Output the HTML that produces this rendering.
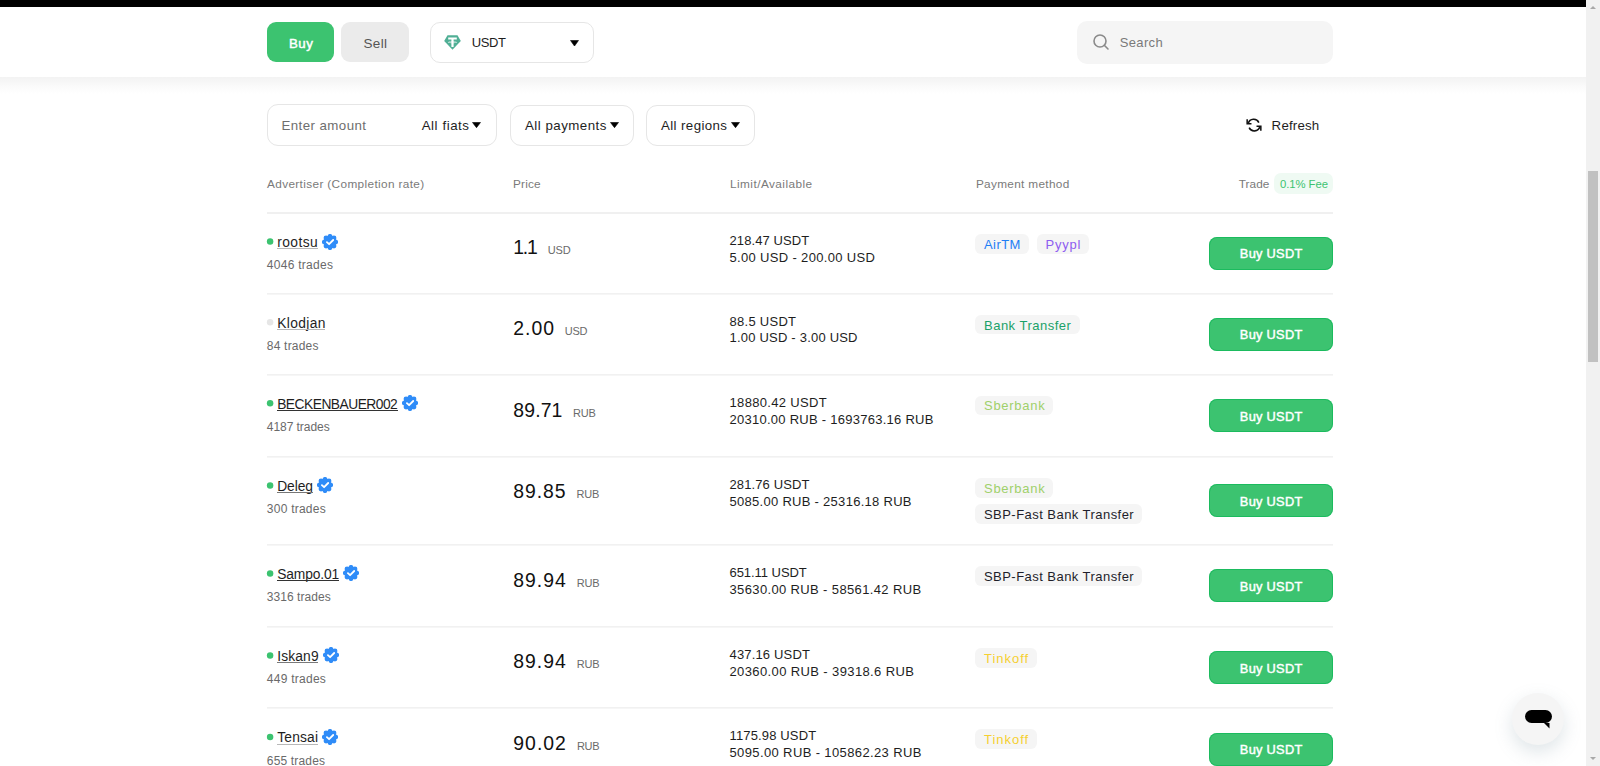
<!DOCTYPE html>
<html><head><meta charset="utf-8">
<style>
html,body{margin:0;padding:0;background:#fff;width:1600px;height:766px;overflow:hidden}
body{position:relative;font-family:"Liberation Sans",sans-serif}
.t{position:absolute;white-space:nowrap}
.b{position:absolute}
</style></head><body>
<div class="b" style="left:0px;top:0px;width:1586px;height:7px;background:#000"></div>
<div class="b" style="left:0px;top:77px;width:1586px;height:17px;background:linear-gradient(#f3f3f3 0%,#f6f6f6 25%,#fbfbfb 60%,#ffffff 100%)"></div>
<div class="b" style="left:267px;top:22px;width:67px;height:40px;background:#3cc370;border-radius:9px"></div>
<div class="t" style="left:289.00px;top:37px;font-size:13.3px;line-height:13.3px;color:#fff;font-weight:400;letter-spacing:0.445px;-webkit-text-stroke:0.45px #fff">Buy</div>
<div class="b" style="left:341px;top:22px;width:68px;height:40px;background:#ebebeb;border-radius:9px"></div>
<div class="t" style="left:363.40px;top:37px;font-size:13.5px;line-height:13.5px;color:#555;font-weight:400;letter-spacing:0.396px;">Sell</div>
<div class="b" style="left:430px;top:22px;width:164px;height:41px;border:1px solid #e6e6e6;border-radius:10px;box-sizing:border-box"></div>
<svg class="b" style="left:444px;top:35px" width="17" height="15" viewBox="0 0 17 15">
<path d="M3.5 0.3 H13.5 L16.8 6 L8.5 14.8 L0.2 6 Z" fill="#50af95"/>
<path d="M4.2 2.6 H12.8 V4.6 H9.6 V6.2 C11.6 6.35 13 6.75 13 7.2 C13 7.65 11.6 8.05 9.6 8.2 V12 H7.4 V8.2 C5.4 8.05 4 7.65 4 7.2 C4 6.75 5.4 6.35 7.4 6.2 V4.6 H4.2 Z M7.4 6.8 C6 6.9 5.1 7.05 5.1 7.2 C5.1 7.4 6.6 7.6 8.5 7.6 C10.4 7.6 11.9 7.4 11.9 7.2 C11.9 7.05 11 6.9 9.6 6.8 V7.4 C9.25 7.42 8.9 7.43 8.5 7.43 C8.1 7.43 7.75 7.42 7.4 7.4 Z" fill="#fff"/>
</svg>
<div class="t" style="left:471.70px;top:36px;font-size:13px;line-height:13px;color:#1e1e1e;font-weight:400;letter-spacing:-0.364px;">USDT</div>
<svg class="b" style="left:569.8px;top:39.6px" width="9" height="6.6" viewBox="0 0 9 6.6"><path d="M0.5 0.5 H8.5 L4.5 6.1 Z" fill="#000" stroke="#000" stroke-width="0.6" stroke-linejoin="round"/></svg>
<div class="b" style="left:1077px;top:21px;width:256px;height:43px;background:#f5f5f5;border-radius:10px"></div>
<svg class="b" style="left:1092px;top:33px" width="18" height="18" viewBox="0 0 18 18"><circle cx="8" cy="8" r="6" fill="none" stroke="#8a8a8a" stroke-width="1.6"/><path d="M12.3 12.3 L16 16" stroke="#8a8a8a" stroke-width="1.6" stroke-linecap="round"/></svg>
<div class="t" style="left:1119.80px;top:36px;font-size:13px;line-height:13px;color:#7a7a7a;font-weight:400;letter-spacing:0.324px;">Search</div>
<div class="b" style="left:267px;top:104px;width:230px;height:42px;border:1px solid #e6e6e6;border-radius:11px;box-sizing:border-box"></div>
<div class="t" style="left:281.50px;top:119px;font-size:13.3px;line-height:13.3px;color:#6e6e6e;font-weight:400;letter-spacing:0.424px;">Enter amount</div>
<div class="t" style="left:421.70px;top:119px;font-size:13.3px;line-height:13.3px;color:#1e1e1e;font-weight:400;letter-spacing:0.555px;">All fiats</div>
<svg class="b" style="left:472.3px;top:122.1px" width="9" height="6.2" viewBox="0 0 9 6.2"><path d="M0.5 0.5 H8.5 L4.5 5.7 Z" fill="#000" stroke="#000" stroke-width="0.6" stroke-linejoin="round"/></svg>
<div class="b" style="left:510px;top:105px;width:124px;height:41px;border:1px solid #e6e6e6;border-radius:11px;box-sizing:border-box"></div>
<div class="t" style="left:525.00px;top:119px;font-size:13.3px;line-height:13.3px;color:#1e1e1e;font-weight:400;letter-spacing:0.478px;">All payments</div>
<svg class="b" style="left:609.6px;top:122.1px" width="9" height="6.2" viewBox="0 0 9 6.2"><path d="M0.5 0.5 H8.5 L4.5 5.7 Z" fill="#000" stroke="#000" stroke-width="0.6" stroke-linejoin="round"/></svg>
<div class="b" style="left:646px;top:105px;width:109px;height:41px;border:1px solid #e6e6e6;border-radius:11px;box-sizing:border-box"></div>
<div class="t" style="left:661.00px;top:119px;font-size:13.3px;line-height:13.3px;color:#1e1e1e;font-weight:400;letter-spacing:0.389px;">All regions</div>
<svg class="b" style="left:730.8px;top:122.1px" width="9" height="6.2" viewBox="0 0 9 6.2"><path d="M0.5 0.5 H8.5 L4.5 5.7 Z" fill="#000" stroke="#000" stroke-width="0.6" stroke-linejoin="round"/></svg>
<svg class="b" style="left:1245px;top:117px" width="18" height="16.2" viewBox="0 0 20 18">
<path d="M3.6 7.2 A6.3 6.3 0 0 1 15.4 6.2" fill="none" stroke="#111" stroke-width="1.7"/>
<path d="M16.4 10.8 A6.3 6.3 0 0 1 4.6 11.8" fill="none" stroke="#111" stroke-width="1.7"/>
<path d="M2.4 2.6 V7.6 H7.2" fill="none" stroke="#111" stroke-width="1.7"/>
<path d="M17.6 15.4 V10.4 H12.8" fill="none" stroke="#111" stroke-width="1.7"/>
</svg>
<div class="t" style="left:1271.60px;top:119px;font-size:13.3px;line-height:13.3px;color:#1e1e1e;font-weight:400;letter-spacing:0.186px;">Refresh</div>
<div class="t" style="left:267.00px;top:179px;font-size:11.8px;line-height:11.8px;color:#7a7a7a;font-weight:400;letter-spacing:0.357px;">Advertiser (Completion rate)</div>
<div class="t" style="left:513.10px;top:179px;font-size:11.8px;line-height:11.8px;color:#7a7a7a;font-weight:400;letter-spacing:0.131px;">Price</div>
<div class="t" style="left:730.00px;top:179px;font-size:11.8px;line-height:11.8px;color:#7a7a7a;font-weight:400;letter-spacing:0.452px;">Limit/Available</div>
<div class="t" style="left:975.90px;top:179px;font-size:11.8px;line-height:11.8px;color:#7a7a7a;font-weight:400;letter-spacing:0.322px;">Payment method</div>
<div class="t" style="left:1238.80px;top:179px;font-size:11.8px;line-height:11.8px;color:#7a7a7a;font-weight:400;letter-spacing:0.029px;">Trade</div>
<div class="b" style="left:1274px;top:173px;width:59px;height:21px;background:#effaf3;border-radius:7px"></div>
<div class="t" style="left:1279.90px;top:179px;font-size:11.3px;line-height:11.3px;color:#3cc370;font-weight:400;letter-spacing:-0.038px;">0.1% Fee</div>
<div class="b" style="left:267px;top:212px;width:1066px;height:2px;background:#f0f0f0"></div>
<div class="b" style="left:267px;top:293px;width:1066px;height:1px;background:#f1f1f1"></div>
<div class="b" style="left:267px;top:294px;width:1066px;height:1px;background:#f6f6f6"></div>
<div class="b" style="left:267px;top:374px;width:1066px;height:1px;background:#f1f1f1"></div>
<div class="b" style="left:267px;top:375px;width:1066px;height:1px;background:#f6f6f6"></div>
<div class="b" style="left:267px;top:456px;width:1066px;height:1px;background:#f1f1f1"></div>
<div class="b" style="left:267px;top:457px;width:1066px;height:1px;background:#f6f6f6"></div>
<div class="b" style="left:267px;top:544px;width:1066px;height:1px;background:#f1f1f1"></div>
<div class="b" style="left:267px;top:545px;width:1066px;height:1px;background:#f6f6f6"></div>
<div class="b" style="left:267px;top:626px;width:1066px;height:1px;background:#f1f1f1"></div>
<div class="b" style="left:267px;top:627px;width:1066px;height:1px;background:#f6f6f6"></div>
<div class="b" style="left:267px;top:707px;width:1066px;height:1px;background:#f1f1f1"></div>
<div class="b" style="left:267px;top:708px;width:1066px;height:1px;background:#f6f6f6"></div>
<svg class="b" style="left:266px;top:237px" width="9" height="9" viewBox="0 0 9 9"><circle cx="4.1" cy="4.50" r="3.25" fill="#3cc370"/></svg>
<div class="t" style="left:277.20px;top:236px;font-size:13.8px;line-height:13.8px;color:#1e1e1e;font-weight:400;letter-spacing:0.447px;">rootsu</div>
<div class="b" style="left:277px;top:248px;width:41px;height:1px;background:#b8b8b8"></div>
<svg class="b" style="left:322.10px;top:233.50px" width="16" height="16" viewBox="0 0 16 16"><g fill="#2f8cf8"><circle cx="8" cy="8" r="6.4"/><circle cx="8.00" cy="2.40" r="2.45"/><circle cx="11.96" cy="4.04" r="2.45"/><circle cx="13.60" cy="8.00" r="2.45"/><circle cx="11.96" cy="11.96" r="2.45"/><circle cx="8.00" cy="13.60" r="2.45"/><circle cx="4.04" cy="11.96" r="2.45"/><circle cx="2.40" cy="8.00" r="2.45"/><circle cx="4.04" cy="4.04" r="2.45"/></g><path d="M4.9 8.1 L7.1 10.2 L11.2 6" fill="none" stroke="#fff" stroke-width="1.8" stroke-linecap="round" stroke-linejoin="round"/></svg>
<div class="t" style="left:266.80px;top:259px;font-size:12px;line-height:12px;color:#6a6a6a;font-weight:400;letter-spacing:0.271px;">4046 trades</div>
<div class="t" style="left:513.30px;top:238px;font-size:19.4px;line-height:19.4px;color:#111;font-weight:400;letter-spacing:-1.283px;">1.1</div>
<div class="t" style="left:547.80px;top:245px;font-size:11px;line-height:11px;color:#6a6a6a;font-weight:400;letter-spacing:-0.219px;">USD</div>
<div class="t" style="left:729.50px;top:234px;font-size:13px;line-height:13px;color:#1e1e1e;font-weight:400;letter-spacing:0.092px;">218.47 USDT</div>
<div class="t" style="left:729.50px;top:251px;font-size:13px;line-height:13px;color:#1e1e1e;font-weight:400;letter-spacing:0.333px;">5.00 USD - 200.00 USD</div>
<div class="b" style="left:975.20px;top:233.90px;width:53.90px;height:19.8px;background:#f5f5f5;border-radius:6px"></div>
<div class="t" style="left:984.00px;top:238px;font-size:13px;line-height:13px;color:#1f7ef5;font-weight:400;letter-spacing:0.414px;">AirTM</div>
<div class="b" style="left:1036.70px;top:233.90px;width:52.60px;height:19.8px;background:#f5f5f5;border-radius:6px"></div>
<div class="t" style="left:1045.50px;top:238px;font-size:13px;line-height:13px;color:#8e5cf0;font-weight:400;letter-spacing:0.804px;">Pyypl</div>
<div class="b" style="left:1209px;top:236.90px;width:124px;height:32.8px;background:#3cc370;border-radius:8px;box-shadow:inset 0 0 0 1px rgba(0,180,80,0.55)"></div>
<div class="t" style="left:1239.80px;top:248px;font-size:12.8px;line-height:12.8px;color:#fff;font-weight:400;letter-spacing:0.293px;-webkit-text-stroke:0.45px #fff">Buy USDT</div>
<svg class="b" style="left:266px;top:318px" width="9" height="9" viewBox="0 0 9 9"><circle cx="4.1" cy="4.30" r="3.25" fill="#e6e6e6"/></svg>
<div class="t" style="left:277.20px;top:317px;font-size:13.8px;line-height:13.8px;color:#1e1e1e;font-weight:400;letter-spacing:0.380px;">Klodjan</div>
<div class="b" style="left:277px;top:329px;width:48px;height:1px;background:#b8b8b8"></div>
<div class="t" style="left:266.80px;top:340px;font-size:12px;line-height:12px;color:#6a6a6a;font-weight:400;letter-spacing:0.207px;">84 trades</div>
<div class="t" style="left:513.30px;top:319px;font-size:19.4px;line-height:19.4px;color:#111;font-weight:400;letter-spacing:1.039px;">2.00</div>
<div class="t" style="left:564.70px;top:326px;font-size:11px;line-height:11px;color:#6a6a6a;font-weight:400;letter-spacing:-0.219px;">USD</div>
<div class="t" style="left:729.50px;top:315px;font-size:13px;line-height:13px;color:#1e1e1e;font-weight:400;letter-spacing:0.273px;">88.5 USDT</div>
<div class="t" style="left:729.50px;top:331px;font-size:13px;line-height:13px;color:#1e1e1e;font-weight:400;letter-spacing:0.207px;">1.00 USD - 3.00 USD</div>
<div class="b" style="left:975.20px;top:314.70px;width:104.50px;height:19.8px;background:#f5f5f5;border-radius:6px"></div>
<div class="t" style="left:984.00px;top:319px;font-size:13px;line-height:13px;color:#1aa168;font-weight:400;letter-spacing:0.498px;">Bank Transfer</div>
<div class="b" style="left:1209px;top:317.80px;width:124px;height:32.8px;background:#3cc370;border-radius:8px;box-shadow:inset 0 0 0 1px rgba(0,180,80,0.55)"></div>
<div class="t" style="left:1239.80px;top:329px;font-size:12.8px;line-height:12.8px;color:#fff;font-weight:400;letter-spacing:0.293px;-webkit-text-stroke:0.45px #fff">Buy USDT</div>
<svg class="b" style="left:266px;top:399px" width="9" height="9" viewBox="0 0 9 9"><circle cx="4.1" cy="4.30" r="3.25" fill="#3cc370"/></svg>
<div class="t" style="left:277.20px;top:398px;font-size:13.8px;line-height:13.8px;color:#1e1e1e;font-weight:400;letter-spacing:-0.516px;">BECKENBAUER002</div>
<div class="b" style="left:277px;top:410px;width:121px;height:1px;background:#333333"></div>
<svg class="b" style="left:402.10px;top:395.30px" width="16" height="16" viewBox="0 0 16 16"><g fill="#2f8cf8"><circle cx="8" cy="8" r="6.4"/><circle cx="8.00" cy="2.40" r="2.45"/><circle cx="11.96" cy="4.04" r="2.45"/><circle cx="13.60" cy="8.00" r="2.45"/><circle cx="11.96" cy="11.96" r="2.45"/><circle cx="8.00" cy="13.60" r="2.45"/><circle cx="4.04" cy="11.96" r="2.45"/><circle cx="2.40" cy="8.00" r="2.45"/><circle cx="4.04" cy="4.04" r="2.45"/></g><path d="M4.9 8.1 L7.1 10.2 L11.2 6" fill="none" stroke="#fff" stroke-width="1.8" stroke-linecap="round" stroke-linejoin="round"/></svg>
<div class="t" style="left:266.80px;top:421px;font-size:12px;line-height:12px;color:#6a6a6a;font-weight:400;letter-spacing:-0.049px;">4187 trades</div>
<div class="t" style="left:513.30px;top:401px;font-size:19.4px;line-height:19.4px;color:#111;font-weight:400;letter-spacing:0.138px;">89.71</div>
<div class="t" style="left:573.00px;top:408px;font-size:11px;line-height:11px;color:#6a6a6a;font-weight:400;letter-spacing:-0.219px;">RUB</div>
<div class="t" style="left:729.50px;top:396px;font-size:13px;line-height:13px;color:#1e1e1e;font-weight:400;letter-spacing:0.333px;">18880.42 USDT</div>
<div class="t" style="left:729.50px;top:413px;font-size:13px;line-height:13px;color:#1e1e1e;font-weight:400;letter-spacing:0.261px;">20310.00 RUB - 1693763.16 RUB</div>
<div class="b" style="left:975.20px;top:395.70px;width:78.30px;height:19.8px;background:#f5f5f5;border-radius:6px"></div>
<div class="t" style="left:984.00px;top:399px;font-size:13px;line-height:13px;color:#9fd06a;font-weight:400;letter-spacing:0.718px;">Sberbank</div>
<div class="b" style="left:1209px;top:399.35px;width:124px;height:32.8px;background:#3cc370;border-radius:8px;box-shadow:inset 0 0 0 1px rgba(0,180,80,0.55)"></div>
<div class="t" style="left:1239.80px;top:411px;font-size:12.8px;line-height:12.8px;color:#fff;font-weight:400;letter-spacing:0.293px;-webkit-text-stroke:0.45px #fff">Buy USDT</div>
<svg class="b" style="left:266px;top:481px" width="9" height="9" viewBox="0 0 9 9"><circle cx="4.1" cy="4.40" r="3.25" fill="#3cc370"/></svg>
<div class="t" style="left:277.20px;top:480px;font-size:13.8px;line-height:13.8px;color:#1e1e1e;font-weight:400;letter-spacing:-0.088px;">Deleg</div>
<div class="b" style="left:277px;top:492px;width:36px;height:1px;background:#777777"></div>
<svg class="b" style="left:317.20px;top:477.40px" width="16" height="16" viewBox="0 0 16 16"><g fill="#2f8cf8"><circle cx="8" cy="8" r="6.4"/><circle cx="8.00" cy="2.40" r="2.45"/><circle cx="11.96" cy="4.04" r="2.45"/><circle cx="13.60" cy="8.00" r="2.45"/><circle cx="11.96" cy="11.96" r="2.45"/><circle cx="8.00" cy="13.60" r="2.45"/><circle cx="4.04" cy="11.96" r="2.45"/><circle cx="2.40" cy="8.00" r="2.45"/><circle cx="4.04" cy="4.04" r="2.45"/></g><path d="M4.9 8.1 L7.1 10.2 L11.2 6" fill="none" stroke="#fff" stroke-width="1.8" stroke-linecap="round" stroke-linejoin="round"/></svg>
<div class="t" style="left:266.80px;top:503px;font-size:12px;line-height:12px;color:#6a6a6a;font-weight:400;letter-spacing:0.244px;">300 trades</div>
<div class="t" style="left:513.30px;top:482px;font-size:19.4px;line-height:19.4px;color:#111;font-weight:400;letter-spacing:0.913px;">89.85</div>
<div class="t" style="left:576.60px;top:489px;font-size:11px;line-height:11px;color:#6a6a6a;font-weight:400;letter-spacing:-0.219px;">RUB</div>
<div class="t" style="left:729.50px;top:478px;font-size:13px;line-height:13px;color:#1e1e1e;font-weight:400;letter-spacing:0.112px;">281.76 USDT</div>
<div class="t" style="left:729.50px;top:495px;font-size:13px;line-height:13px;color:#1e1e1e;font-weight:400;letter-spacing:0.285px;">5085.00 RUB - 25316.18 RUB</div>
<div class="b" style="left:975.20px;top:477.80px;width:78.30px;height:19.8px;background:#f5f5f5;border-radius:6px"></div>
<div class="t" style="left:984.00px;top:482px;font-size:13px;line-height:13px;color:#9fd06a;font-weight:400;letter-spacing:0.718px;">Sberbank</div>
<div class="b" style="left:975.20px;top:504.10px;width:167.30px;height:19.8px;background:#f5f5f5;border-radius:6px"></div>
<div class="t" style="left:984.00px;top:508px;font-size:13px;line-height:13px;color:#1e1e2a;font-weight:400;letter-spacing:0.454px;">SBP-Fast Bank Transfer</div>
<div class="b" style="left:1209px;top:484.40px;width:124px;height:32.8px;background:#3cc370;border-radius:8px;box-shadow:inset 0 0 0 1px rgba(0,180,80,0.55)"></div>
<div class="t" style="left:1239.80px;top:496px;font-size:12.8px;line-height:12.8px;color:#fff;font-weight:400;letter-spacing:0.293px;-webkit-text-stroke:0.45px #fff">Buy USDT</div>
<svg class="b" style="left:266px;top:569px" width="9" height="9" viewBox="0 0 9 9"><circle cx="4.1" cy="4.40" r="3.25" fill="#3cc370"/></svg>
<div class="t" style="left:277.20px;top:568px;font-size:13.8px;line-height:13.8px;color:#1e1e1e;font-weight:400;letter-spacing:-0.142px;">Sampo.01</div>
<div class="b" style="left:277px;top:580px;width:62px;height:1px;background:#333333"></div>
<svg class="b" style="left:343.40px;top:565.40px" width="16" height="16" viewBox="0 0 16 16"><g fill="#2f8cf8"><circle cx="8" cy="8" r="6.4"/><circle cx="8.00" cy="2.40" r="2.45"/><circle cx="11.96" cy="4.04" r="2.45"/><circle cx="13.60" cy="8.00" r="2.45"/><circle cx="11.96" cy="11.96" r="2.45"/><circle cx="8.00" cy="13.60" r="2.45"/><circle cx="4.04" cy="11.96" r="2.45"/><circle cx="2.40" cy="8.00" r="2.45"/><circle cx="4.04" cy="4.04" r="2.45"/></g><path d="M4.9 8.1 L7.1 10.2 L11.2 6" fill="none" stroke="#fff" stroke-width="1.8" stroke-linecap="round" stroke-linejoin="round"/></svg>
<div class="t" style="left:266.80px;top:591px;font-size:12px;line-height:12px;color:#6a6a6a;font-weight:400;letter-spacing:0.051px;">3316 trades</div>
<div class="t" style="left:513.30px;top:571px;font-size:19.4px;line-height:19.4px;color:#111;font-weight:400;letter-spacing:0.963px;">89.94</div>
<div class="t" style="left:576.80px;top:578px;font-size:11px;line-height:11px;color:#6a6a6a;font-weight:400;letter-spacing:-0.219px;">RUB</div>
<div class="t" style="left:729.50px;top:566px;font-size:13px;line-height:13px;color:#1e1e1e;font-weight:400;letter-spacing:-0.051px;">651.11 USDT</div>
<div class="t" style="left:729.50px;top:583px;font-size:13px;line-height:13px;color:#1e1e1e;font-weight:400;letter-spacing:0.364px;">35630.00 RUB - 58561.42 RUB</div>
<div class="b" style="left:975.20px;top:565.80px;width:167.30px;height:19.8px;background:#f5f5f5;border-radius:6px"></div>
<div class="t" style="left:984.00px;top:570px;font-size:13px;line-height:13px;color:#1e1e2a;font-weight:400;letter-spacing:0.454px;">SBP-Fast Bank Transfer</div>
<div class="b" style="left:1209px;top:569.40px;width:124px;height:32.8px;background:#3cc370;border-radius:8px;box-shadow:inset 0 0 0 1px rgba(0,180,80,0.55)"></div>
<div class="t" style="left:1239.80px;top:581px;font-size:12.8px;line-height:12.8px;color:#fff;font-weight:400;letter-spacing:0.293px;-webkit-text-stroke:0.45px #fff">Buy USDT</div>
<svg class="b" style="left:266px;top:651px" width="9" height="9" viewBox="0 0 9 9"><circle cx="4.1" cy="4.40" r="3.25" fill="#3cc370"/></svg>
<div class="t" style="left:277.20px;top:650px;font-size:13.8px;line-height:13.8px;color:#1e1e1e;font-weight:400;letter-spacing:0.145px;">Iskan9</div>
<div class="b" style="left:277px;top:662px;width:41px;height:1px;background:#7a7a7a"></div>
<svg class="b" style="left:322.90px;top:647.40px" width="16" height="16" viewBox="0 0 16 16"><g fill="#2f8cf8"><circle cx="8" cy="8" r="6.4"/><circle cx="8.00" cy="2.40" r="2.45"/><circle cx="11.96" cy="4.04" r="2.45"/><circle cx="13.60" cy="8.00" r="2.45"/><circle cx="11.96" cy="11.96" r="2.45"/><circle cx="8.00" cy="13.60" r="2.45"/><circle cx="4.04" cy="11.96" r="2.45"/><circle cx="2.40" cy="8.00" r="2.45"/><circle cx="4.04" cy="4.04" r="2.45"/></g><path d="M4.9 8.1 L7.1 10.2 L11.2 6" fill="none" stroke="#fff" stroke-width="1.8" stroke-linecap="round" stroke-linejoin="round"/></svg>
<div class="t" style="left:266.80px;top:673px;font-size:12px;line-height:12px;color:#6a6a6a;font-weight:400;letter-spacing:0.256px;">449 trades</div>
<div class="t" style="left:513.30px;top:652px;font-size:19.4px;line-height:19.4px;color:#111;font-weight:400;letter-spacing:0.963px;">89.94</div>
<div class="t" style="left:576.80px;top:659px;font-size:11px;line-height:11px;color:#6a6a6a;font-weight:400;letter-spacing:-0.219px;">RUB</div>
<div class="t" style="left:729.50px;top:648px;font-size:13px;line-height:13px;color:#1e1e1e;font-weight:400;letter-spacing:0.162px;">437.16 USDT</div>
<div class="t" style="left:729.50px;top:665px;font-size:13px;line-height:13px;color:#1e1e1e;font-weight:400;letter-spacing:0.381px;">20360.00 RUB - 39318.6 RUB</div>
<div class="b" style="left:975.20px;top:647.80px;width:61.70px;height:19.8px;background:#f5f5f5;border-radius:6px"></div>
<div class="t" style="left:984.00px;top:652px;font-size:13px;line-height:13px;color:#f5d030;font-weight:400;letter-spacing:0.964px;">Tinkoff</div>
<div class="b" style="left:1209px;top:651.20px;width:124px;height:32.8px;background:#3cc370;border-radius:8px;box-shadow:inset 0 0 0 1px rgba(0,180,80,0.55)"></div>
<div class="t" style="left:1239.80px;top:663px;font-size:12.8px;line-height:12.8px;color:#fff;font-weight:400;letter-spacing:0.293px;-webkit-text-stroke:0.45px #fff">Buy USDT</div>
<svg class="b" style="left:266px;top:732px" width="9" height="9" viewBox="0 0 9 9"><circle cx="4.1" cy="5.00" r="3.25" fill="#3cc370"/></svg>
<div class="t" style="left:277.20px;top:731px;font-size:13.8px;line-height:13.8px;color:#1e1e1e;font-weight:400;letter-spacing:0.184px;">Tensai</div>
<div class="b" style="left:277px;top:744px;width:41px;height:1px;background:#b8b8b8"></div>
<svg class="b" style="left:322.30px;top:729.00px" width="16" height="16" viewBox="0 0 16 16"><g fill="#2f8cf8"><circle cx="8" cy="8" r="6.4"/><circle cx="8.00" cy="2.40" r="2.45"/><circle cx="11.96" cy="4.04" r="2.45"/><circle cx="13.60" cy="8.00" r="2.45"/><circle cx="11.96" cy="11.96" r="2.45"/><circle cx="8.00" cy="13.60" r="2.45"/><circle cx="4.04" cy="11.96" r="2.45"/><circle cx="2.40" cy="8.00" r="2.45"/><circle cx="4.04" cy="4.04" r="2.45"/></g><path d="M4.9 8.1 L7.1 10.2 L11.2 6" fill="none" stroke="#fff" stroke-width="1.8" stroke-linecap="round" stroke-linejoin="round"/></svg>
<div class="t" style="left:266.80px;top:755px;font-size:12px;line-height:12px;color:#6a6a6a;font-weight:400;letter-spacing:0.167px;">655 trades</div>
<div class="t" style="left:513.30px;top:734px;font-size:19.4px;line-height:19.4px;color:#111;font-weight:400;letter-spacing:1.013px;">90.02</div>
<div class="t" style="left:576.90px;top:741px;font-size:11px;line-height:11px;color:#6a6a6a;font-weight:400;letter-spacing:-0.219px;">RUB</div>
<div class="t" style="left:729.50px;top:729px;font-size:13px;line-height:13px;color:#1e1e1e;font-weight:400;letter-spacing:0.144px;">1175.98 USDT</div>
<div class="t" style="left:729.50px;top:746px;font-size:13px;line-height:13px;color:#1e1e1e;font-weight:400;letter-spacing:0.376px;">5095.00 RUB - 105862.23 RUB</div>
<div class="b" style="left:975.20px;top:729.40px;width:61.70px;height:19.8px;background:#f5f5f5;border-radius:6px"></div>
<div class="t" style="left:984.00px;top:733px;font-size:13px;line-height:13px;color:#f5d030;font-weight:400;letter-spacing:0.964px;">Tinkoff</div>
<div class="b" style="left:1209px;top:733.00px;width:124px;height:32.8px;background:#3cc370;border-radius:8px;box-shadow:inset 0 0 0 1px rgba(0,180,80,0.55)"></div>
<div class="t" style="left:1239.80px;top:744px;font-size:12.8px;line-height:12.8px;color:#fff;font-weight:400;letter-spacing:0.293px;-webkit-text-stroke:0.45px #fff">Buy USDT</div>
<div class="b" style="left:1586px;top:0px;width:14px;height:766px;background:#f1f1f1"></div>
<div class="b" style="left:1588px;top:171px;width:10px;height:191px;background:#c1c1c1"></div>
<svg class="b" style="left:1589px;top:5px" width="8" height="5" viewBox="0 0 8 5"><path d="M1 4 L4 1 L7 4 Z" fill="#a8a8a8"/></svg>
<svg class="b" style="left:1589px;top:756px" width="8" height="5" viewBox="0 0 8 5"><path d="M1 1 L4 4 L7 1 Z" fill="#a8a8a8"/></svg>
<div class="b" style="left:1512px;top:693px;width:52px;height:52px;border-radius:50%;background:#f5f5f5;box-shadow:0 7px 18px rgba(110,135,150,0.22)"></div>
<svg class="b" style="left:1524px;top:709px" width="30" height="22" viewBox="0 0 30 22"><rect x="1" y="1" width="27" height="13" rx="6.5" fill="#000"/><path d="M20 14 L25.5 14 L25.5 19.5 Z" fill="#000"/></svg>
</body></html>
